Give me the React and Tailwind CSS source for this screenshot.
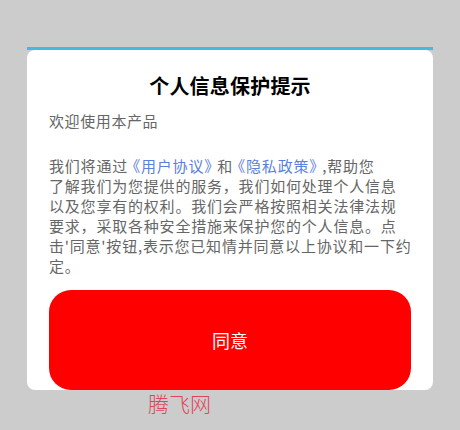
import React from "react";

export default function App() {
  return (
    <div
      className="relative w-[460px] h-[430px] bg-[#cccccc] overflow-hidden"
      style={{ fontFamily: '"Noto Sans CJK SC", "Noto Sans", sans-serif' }}
    >
      <div className="pt-[47px] px-[27px]">
        <div className="h-[3px] bg-[#45b8e4]" />
        <div className="bg-white rounded-[8px] h-[340px] pt-[22px] px-[22px] flex flex-col">
          <div className="text-[20px] leading-[28px] font-bold text-black text-center tracking-[0.2px]">
            个人信息保护提示
          </div>
          <div className="mt-[11px] text-[15px] leading-[20px] tracking-[0.6px] text-[#666666]">
            欢迎使用本产品
          </div>
          <div className="mt-[25px] text-[15px] leading-[20px] tracking-[0.8px] text-[#666666] whitespace-nowrap">
            我们将通<span className="tracking-[-2px]">过</span>
            <span className="text-[#5b7fdc]">《用户协议<span className="tracking-[-2px]">》</span></span>
            <span className="tracking-[-2px]">和</span>
            <span className="text-[#5b7fdc]">《隐私政策<span className="tracking-[-2px]">》</span></span>,帮助您
            <br />
            了解我们为您提供的服务，我们如何处理个人信息
            <br />
            以及您享有的权利。我们会严格按照相关法律法规
            <br />
            要求，采取各种安全措施来保护您的个人信息。点
            <br />
            击'同意'按钮,表示您已知情并同意以上协议和一下约
            <br />
            定。
          </div>
          <button className="mt-auto h-[100px] w-full rounded-[22px] bg-[#ff0000] text-white text-[18px] flex items-center justify-center">
            同意
          </button>
        </div>
      </div>
      <div className="absolute left-[148px] top-[389px] text-[21px] leading-[28px] font-light text-[#e0445c]">
        腾飞网
      </div>
    </div>
  );
}
